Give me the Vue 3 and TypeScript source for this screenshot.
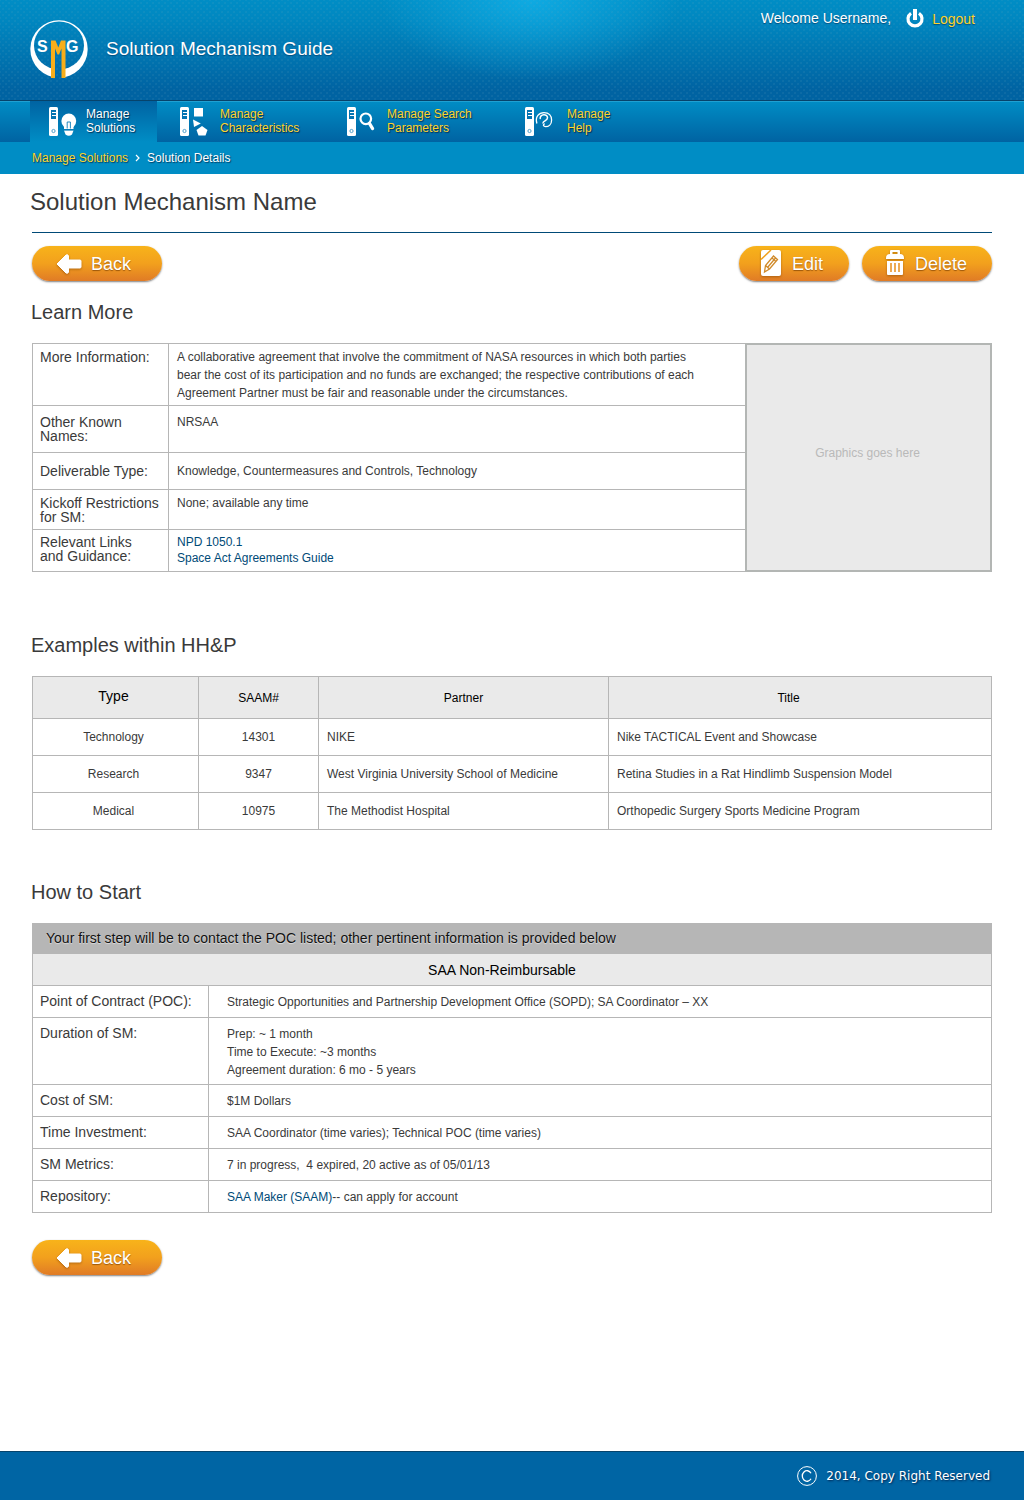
<script setup lang="ts">
interface NavItem { id: string; lines: string[]; active?: boolean }
interface Example { type: string; saam: string; partner: string; title: string }
interface StartRow { label: string; lines: string[]; link?: string }

const nav: NavItem[] = [
  { id: 'solutions', lines: ['Manage', 'Solutions'], active: true },
  { id: 'characteristics', lines: ['Manage', 'Characteristics'] },
  { id: 'search', lines: ['Manage Search', 'Parameters'] },
  { id: 'help', lines: ['Manage', 'Help'] },
]

const examples: Example[] = [
  { type: 'Technology', saam: '14301', partner: 'NIKE', title: 'Nike TACTICAL Event and Showcase' },
  { type: 'Research', saam: '9347', partner: 'West Virginia University School of Medicine', title: 'Retina Studies in a Rat Hindlimb Suspension Model' },
  { type: 'Medical', saam: '10975', partner: 'The Methodist Hospital', title: 'Orthopedic Surgery Sports Medicine Program' },
]

const startRows: StartRow[] = [
  { label: 'Point of Contract (POC):', lines: ['Strategic Opportunities and Partnership Development Office (SOPD); SA Coordinator – XX'] },
  { label: 'Duration of SM:', lines: ['Prep: ~ 1 month', 'Time to Execute: ~3 months', 'Agreement duration: 6 mo - 5 years'] },
  { label: 'Cost of SM:', lines: ['$1M Dollars'] },
  { label: 'Time Investment:', lines: ['SAA Coordinator (time varies); Technical POC (time varies)'] },
  { label: 'SM Metrics:', lines: ['7 in progress,\u00a0 4 expired, 20 active as of 05/01/13'] },
  { label: 'Repository:', link: 'SAA Maker (SAAM)', lines: ['-- can apply for account'] },
]
</script>

<template>
  <div class="page">
    <header class="banner">
      <a class="brand" href="#">
        <svg class="logo" viewBox="0 0 58 58" width="58" height="58" aria-hidden="true">
          <mask id="ring">
            <circle cx="29" cy="29" r="28.700" fill="#fff" />
            <ellipse cx="29" cy="25.500" rx="25" ry="24" fill="#000" />
            <path d="M22 40h12v18H22z" fill="#000" />
          </mask>
          <path fill="#fff" mask="url(#ring)" d="M0 0h58v58H0z" />
          <text x="7" y="32" class="logo-text">S</text>
          <text x="36" y="32" class="logo-text">G</text>
          <path class="mark" fill="#f7ae1a" d="M21 20.500h4.500l2.800 7 2.700-7h4.500V58H31.500V28.500L29 34.500h-1.500L25 28.500V58h-4z" />
        </svg>
        <span>Solution Mechanism Guide</span>
      </a>
      <div class="account">
        <span>Welcome Username,</span>
        <a class="logout" href="#">
          <svg viewBox="0 0 18 20" width="18" height="20" aria-hidden="true">
            <path d="M5 5.200a7 7 0 1 0 8 0" fill="none" stroke="#fff" stroke-width="3.200" />
            <path d="M7 1h4v11H7z" fill="#fff" />
          </svg>
          <span>Logout</span>
        </a>
      </div>
    </header>

    <nav class="tabs">
      <a v-for="item in nav" :key="item.id" href="#" :class="['tab', item.id, { active: item.active }]">
        <svg class="tab-icon" viewBox="0 0 28 30" width="28" height="30" aria-hidden="true">
          <rect x="0" y="1" width="9" height="29" rx="1.500" fill="#fff" />
          <path d="M2 4h5v9H2z" fill="#0575b2" />
          <path d="M3 6.500h4M3 9.500h4" stroke="#fff" />
          <circle cx="4.500" cy="25" r="1.600" fill="none" stroke="#4f9fcb" />
          <g v-if="item.id === 'solutions'">
            <circle cx="19.800" cy="15" r="7.400" fill="#fff" />
            <path fill="#fff" d="M15 19h9.500v4H15zM15 24.500h9.500l-1.500 4q-3.200 2.500-6.500 0z" />
            <path d="M18.200 22.500v-6.500h3.200v6.500M15 23.800h9.500" fill="none" stroke="#0d7db8" stroke-width=".9" />
          </g>
          <g v-else-if="item.id === 'characteristics'" fill="#fff">
            <path d="M14 2h9v8.500h-9z" />
            <path d="M13 13.500L20.800 17.500 14 21z" />
            <path d="M22 20L27.500 24 25.500 29.500H18.500L16.500 24z" />
          </g>
          <g v-else-if="item.id === 'search'" fill="none" stroke="#fff">
            <circle cx="18.800" cy="12.800" r="5.300" stroke-width="2.200" />
            <path d="M22.500 17.500l3 5" stroke-width="3.400" stroke-linecap="round" />
          </g>
          <g v-else fill="none" stroke="#fff" stroke-linecap="round">
            <path d="M11.800 17C10 10.500 14 6.600 19 6.600S26.600 10 26.600 14c0 4.500-3 6.700-6 6.700-2.200 0-3-2-1.200-2.700" stroke-width="1.300" />
            <path d="M15.200 12.500c-.6-4.500 7.300-5.200 7.300-.7 0 3-4.300 3-4.500 5.200" stroke-width="1.500" />
          </g>
        </svg>
        <span><template v-for="(line, i) in item.lines" :key="line"><br v-if="i">{{ line }}</template></span>
      </a>
    </nav>

    <div class="crumbs">
      <a href="#">Manage Solutions</a>
      <svg viewBox="0 0 5 8" width="5" height="8" aria-hidden="true"><path d="M1 1l3 3-3 3" fill="none" stroke="#fff" stroke-width="1.200" /></svg>
      <span>Solution Details</span>
    </div>

    <main>
      <h1>Solution Mechanism Name</h1>

      <div class="actions">
        <button type="button" class="pill">
          <svg viewBox="0 0 26 20" width="26" height="20" aria-hidden="true"><path d="M1 10L10 1q2-1 2.500 1v4H24q1 0 1 1v6q0 1-1 1H12.500v4q-.5 2-2.500 1z" fill="#fff" stroke="#fff" stroke-linejoin="round" /></svg>
          Back
        </button>
        <div class="right">
          <button type="button" class="pill edit">
            <svg viewBox="0 0 20 26" width="20" height="26" aria-hidden="true">
              <rect width="20" height="26" rx="2" fill="#fff" />
              <path d="M0 9.500L10 0" stroke="#f0a01c" stroke-width="1.500" />
              <path d="M3.500 22l1-6.500 8-9.500 4 3.500-8 9.500zM4.500 15.500l4 3.500M6.500 17.500l8-9.500M11 8l4 3.500" fill="none" stroke="#d08a2a" stroke-width="1.300" />
            </svg>
            Edit
          </button>
          <button type="button" class="pill delete">
            <svg viewBox="0 0 18 26" width="18" height="26" aria-hidden="true">
              <path fill="#fff" fill-rule="evenodd" d="M4 4V1q0-1 1-1h8q1 0 1 1v3q4 0 4 4v1H0V8q0-4 4-4zM6.500 2v2h5V2zM1 11h16v13q0 1-1 1H2q-1 0-1-1z" />
              <path d="M5 13v9M9 13v9M13 13v9" stroke="#e8901d" stroke-width="1.500" />
            </svg>
            Delete
          </button>
        </div>
      </div>

      <h2>Learn More</h2>
      <div class="learn">
        <table class="info">
          <tbody>
            <tr class="r-info"><th scope="row">More Information:</th><td>A collaborative agreement that involve the commitment of NASA resources in which both parties<br>bear the cost of its participation and no funds are exchanged; the respective contributions of each<br>Agreement Partner must be fair and reasonable under the circumstances.</td></tr>
            <tr class="r-names"><th scope="row">Other Known<br>Names:</th><td>NRSAA</td></tr>
            <tr class="r-type"><th scope="row">Deliverable Type:</th><td>Knowledge, Countermeasures and Controls, Technology</td></tr>
            <tr class="r-kick"><th scope="row">Kickoff Restrictions<br>for SM:</th><td>None; available any time</td></tr>
            <tr class="r-links"><th scope="row">Relevant Links<br>and Guidance:</th><td><a href="#">NPD 1050.1</a><br><a href="#">Space Act Agreements Guide</a></td></tr>
          </tbody>
        </table>
        <div class="graphic">Graphics goes here</div>
      </div>

      <h2>Examples within HH&amp;P</h2>
      <table class="examples">
        <colgroup><col class="c-type"><col class="c-saam"><col class="c-partner"><col></colgroup>
        <thead>
          <tr><th scope="col" class="first">Type</th><th scope="col">SAAM#</th><th scope="col">Partner</th><th scope="col" class="last">Title</th></tr>
        </thead>
        <tbody>
          <tr v-for="row in examples" :key="row.saam">
            <td>{{ row.type }}</td><td>{{ row.saam }}</td><td>{{ row.partner }}</td><td>{{ row.title }}</td>
          </tr>
        </tbody>
      </table>

      <h2>How to Start</h2>
      <table class="start">
        <caption>Your first step will be to contact the POC listed; other pertinent information is provided below</caption>
        <colgroup><col class="c-label"><col></colgroup>
        <thead><tr><th colspan="2" scope="colgroup">SAA Non-Reimbursable</th></tr></thead>
        <tbody>
          <tr v-for="row in startRows" :key="row.label">
            <th scope="row">{{ row.label }}</th>
            <td><a v-if="row.link" href="#">{{ row.link }}</a><template v-for="(line, i) in row.lines" :key="line"><br v-if="i">{{ line }}</template></td>
          </tr>
        </tbody>
      </table>

      <button type="button" class="pill">
        <svg viewBox="0 0 26 20" width="26" height="20" aria-hidden="true"><path d="M1 10L10 1q2-1 2.500 1v4H24q1 0 1 1v6q0 1-1 1H12.500v4q-.5 2-2.500 1z" fill="#fff" stroke="#fff" stroke-linejoin="round" /></svg>
        Back
      </button>
    </main>

    <footer>
      <svg viewBox="0 0 20 20" width="20" height="20" aria-hidden="true"><g fill="none" stroke="#fff"><circle cx="10" cy="10" r="9.400" /><path d="M14 7.200a4.700 5.300 0 1 0 0 5.600" stroke-width="1.300" /></g></svg>
      <span>2014, Copy Right Reserved</span>
    </footer>
  </div>
</template>

<style>
body { background: #fff; }
</style>

<style scoped>
.page {
  display: flex;
  flex-direction: column;
  min-height: 100vh;
  font-family: "Liberation Sans", Arial, sans-serif;
  color: #3a3a3a;
}
a { text-decoration: none; color: #004a77; }
svg { display: block; flex: none; }

.banner {
  box-sizing: border-box;
  height: 101px;
  display: flex;
  justify-content: space-between;
  align-items: flex-start;
  padding: 0 49px 0 30px;
  border-bottom: 1px solid #06436b;
  background:
    radial-gradient(circle, rgba(110, 170, 190, .4) 0, rgba(110, 170, 190, 0) 1px) 0 0 / 6px 6px,
    radial-gradient(circle, rgba(110, 170, 190, .4) 0, rgba(110, 170, 190, 0) 1px) 3px 3px / 6px 6px,
    radial-gradient(ellipse 150px 80px at 530px 0, rgba(20, 180, 235, .75), rgba(20, 180, 235, 0)),
    linear-gradient(#008dc5, #0087c0 20%, #0063a2 90%);
}
.brand { display: flex; align-items: center; gap: 18px; margin-top: 20px; color: #fff; font-size: 19px; text-shadow: 0 1px 1px rgba(0, 50, 90, .6); }
.logo-text { font: bold 16px "Liberation Sans", Arial, sans-serif; fill: #fff; text-shadow: none; }
.account { display: flex; gap: 15px; margin-top: 8px; font-size: 14px; line-height: 20px; color: #fff; text-shadow: 0 1px 1px rgba(0, 40, 80, .6); }
.logout { display: flex; gap: 8px; color: #fdd32b; }
.logout span { padding-top: 1px; }

.tabs { display: flex; height: 41px; padding-left: 30px; background: linear-gradient(#008dc5, #0063a2); box-shadow: inset 0 1px #1fa0d2; }
.tab { display: flex; align-items: flex-start; gap: 9px; box-sizing: border-box; padding: 5px 0 0 19px; color: #fdd32b; font-size: 12px; line-height: 14px; text-shadow: 1px 1px 1px rgba(0, 30, 60, .8); }
.tab span { padding-top: 1px; }
.solutions { width: 127px; }
.characteristics { width: 171px; padding-left: 23px; gap: 12px; }
.search { width: 178px; gap: 12px; }
.help { gap: 14px; }
.tab.active { color: #fff; background: linear-gradient(#0063a2, #008dc5); }

.crumbs { display: flex; align-items: center; gap: 7px; height: 32px; padding-left: 32px; background: #008dc5; color: #fff; font-size: 12px; text-shadow: 1px 1px 1px rgba(0, 30, 60, .7); }
.crumbs a { color: #fdd32b; }

main { flex: 1; padding: 0 32px; }
h1, h2 { margin: 0; font-weight: 400; }
h1 { padding: 14px 0 16px; margin-left: -2px; font-size: 24px; line-height: 28px; }
h2 { font-size: 20px; line-height: 24px; margin: 19px 0 19px -1px; }

.actions { display: flex; justify-content: space-between; border-top: 1px solid #004a77; padding-top: 13px; }
.right { display: flex; gap: 13px; }
.pill {
  display: flex;
  align-items: center;
  gap: 9px;
  width: 130px;
  height: 35px;
  padding: 1px 0 0 24px;
  border: 0;
  border-radius: 18px;
  background: linear-gradient(#f8b31a, #f2a01d 50%, #e07b26);
  box-shadow: 0 1px 2px rgba(0, 0, 0, .5);
  color: #fff;
  font: 18px "Liberation Sans", Arial, sans-serif;
  text-shadow: 0 1px 1px rgba(120, 60, 0, .7);
}
.pill svg { filter: drop-shadow(0 1px 1px rgba(120, 60, 0, .5)); }
.edit { width: 110px; padding-left: 22px; gap: 11px; }
.delete { gap: 11px; }
.edit svg, .delete svg { margin-bottom: 2px; }

table { border-collapse: collapse; table-layout: fixed; width: 100%; font-size: 12px; line-height: 18px; }
th, td { box-sizing: border-box; border: 1px solid #b6b6b6; text-align: left; vertical-align: top; font-weight: 400; }
.learn { display: flex; margin-bottom: 61px; }
.info { flex: 1; width: auto; }
.info th { width: 136px; padding: 6px 0 0 7px; font-size: 14px; line-height: 14px; white-space: nowrap; }
.info td { padding: 4px 8px 0; white-space: nowrap; border-right: 0; }
.r-info { height: 62px; }
.r-names { height: 47px; }
.info .r-names th { padding-top: 9px; }
.info .r-names td { padding-top: 7px; }
.r-type { height: 37px; }
.info .r-type th { padding-top: 11px; }
.info .r-type td { padding-top: 9px; }
.r-kick { height: 40px; }
.r-links { height: 42px; }
.info .r-links th { padding-top: 5px; }
.info .r-links td { line-height: 16px; }
.graphic { box-sizing: border-box; width: 247px; display: flex; align-items: center; justify-content: center; border: 2px solid #b3b6b4; background: #eaeaea; color: #b9b9b9; font-size: 12px; padding: 0 2px 10px 0; }

.examples { margin-bottom: 50px; }
.examples tr { height: 37px; }
.examples thead tr { height: 42px; }
.examples th { background: #eaeaea; color: #000; text-align: center; vertical-align: middle; font-size: 12px; }
.examples th.first { padding: 0 4px 4px 0; font-size: 14px; }
.examples th.last { padding-right: 24px; }
.examples td { vertical-align: middle; padding: 0 8px; }
.examples td:nth-child(-n+2) { text-align: center; }
.examples td:first-child { padding: 0 12px 0 8px; }
.c-type { width: 166px; }
.c-saam { width: 120px; }
.c-partner { width: 290px; }
.c-label { width: 176px; }

.start { margin-bottom: 27px; }
.start caption { background: #b6b6b6; color: #111; text-align: left; padding: 0 14px; font-size: 14px; line-height: 30px; text-shadow: 0 1px 1px #ddd; }
.start tr { height: 32px; }
.start th { padding: 6px 0 0 7px; font-size: 14px; }
.start thead th { background: #eaeaea; color: #000; text-align: center; padding: 0 20px 0 0; vertical-align: middle; }
.start td { padding: 7px 18px 5px; }

footer { box-sizing: border-box; height: 49px; display: flex; align-items: center; justify-content: flex-end; gap: 9px; padding-right: 34px; border-top: 1px solid #06436b; background: #0065a4; color: #fff; font: 12px "DejaVu Sans", Verdana, sans-serif; text-shadow: 1px 1px 2px rgba(0, 20, 60, .8); }
</style>
